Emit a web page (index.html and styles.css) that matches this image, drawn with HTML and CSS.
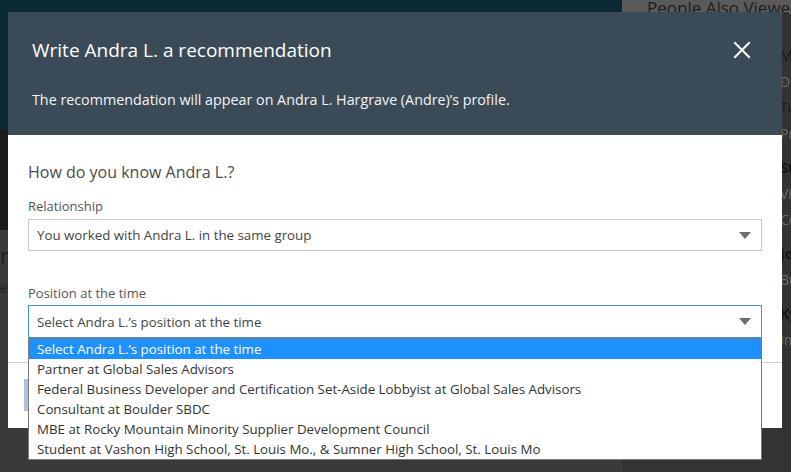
FILE: index.html
```html
<!DOCTYPE html>
<html lang="en">
<head>
    <meta charset="UTF-8">
    <link rel="stylesheet" href="styles.css">
</head>
<body>
    <div class="page">
        <div class="main-col">
            <div class="banner"></div>
            <div class="profile-strip"></div>
            <div class="profile-rest">
                <p class="frag big">r</p>
                <p class="frag">er</p>
            </div>
        </div>
        <aside class="sidebar">
            <div class="side-head">People Also Viewed</div>
            <div class="side-list">
                <p class="side-name">Michael Anderson</p>
                <p class="side-sub">Director of Sales</p>
                <p class="side-name">Teresa Jones</p>
                <p class="side-sub">Program Manager</p>
                <p class="side-bold">Stephanie Marsh</p>
                <p class="side-sub">Vice President</p>
                <p class="side-sub">Colorado</p>
                <p class="side-bold">Joseph Martinez</p>
                <p class="side-sub">Business Consultant</p>
                <p class="side-bold">Kyle Reynolds</p>
                <p class="side-sub">Implementation Lead</p>
            </div>
        </aside>
    </div>

    <div class="modal">
        <div class="modal-header">
            <div class="header-row">
                <h2>Write Andra L. a recommendation</h2>
                <button class="close" aria-label="Close">
                    <svg width="18" height="18" viewBox="0 0 18 18">
                        <path d="M2 2 L16 16 M16 2 L2 16" stroke="#ffffff" stroke-width="2" stroke-linecap="square"/>
                    </svg>
                </button>
            </div>
            <p class="subtitle">The recommendation will appear on Andra L. Hargrave (Andre)’s profile.</p>
        </div>

        <div class="modal-body">
            <h3>How do you know Andra L.?</h3>

            <label class="field-label">Relationship</label>
            <div class="select">
                <span>You worked with Andra L. in the same group</span>
                <span class="caret"></span>
            </div>

            <label class="field-label second">Position at the time</label>
            <div class="select-wrap">
                <div class="select focused">
                    <span>Select Andra L.’s position at the time</span>
                    <span class="caret"></span>
                </div>
                <ul class="options">
                    <li class="selected">Select Andra L.’s position at the time</li>
                    <li>Partner at Global Sales Advisors</li>
                    <li>Federal Business Developer and Certification Set-Aside Lobbyist at Global Sales Advisors</li>
                    <li>Consultant at Boulder SBDC</li>
                    <li>MBE at Rocky Mountain Minority Supplier Development Council</li>
                    <li>Student at Vashon High School, St. Louis Mo., &amp; Sumner High School, St. Louis Mo</li>
                </ul>
            </div>
        </div>

        <div class="modal-footer">
            <button class="next" aria-label="Next"></button>
        </div>
    </div>
</body>
</html>
```

FILE: styles.css
```css
* {
    box-sizing: border-box;
}
body {
    margin: 0;
    font-family: "Open Sans", "Noto Sans", sans-serif;
    background-color: #3b3b3b;
    overflow: hidden;
}
.page {
    display: flex;
    width: 791px;
    height: 472px;
}
.main-col {
    width: 622px;
    flex-shrink: 0;
    display: flex;
    flex-direction: column;
}
.banner {
    height: 130px;
    background-color: #0c2a33;
}
.profile-strip {
    height: 100px;
    background-color: #1c1c1c;
}
.profile-rest {
    flex: 1;
    background-color: #3a3a3a;
    padding-top: 10px;
}
.frag {
    margin: 0 0 8px 0;
    color: #222;
    font-size: 14px;
}
.frag.big {
    font-size: 22px;
}
.sidebar {
    flex: 1;
    min-width: 0;
    background-color: #333333;
    display: flex;
    flex-direction: column;
    overflow: hidden;
}
.side-head {
    height: 14px;
    background-color: #5a5a5a;
    color: #1d1d1d;
    font-size: 17px;
    line-height: 16px;
    padding-left: 25px;
    white-space: nowrap;
}
.side-list {
    padding: 34px 0 0 158px;
    white-space: nowrap;
}
.side-list p {
    margin: 0 0 10px 0;
    font-size: 14px;
    line-height: 16px;
}
.side-name {
    color: #1a1a1a;
}
.side-sub {
    color: #6b6b6b;
}
.side-bold {
    color: #161616;
    font-weight: 700;
    margin-top: 18px !important;
}

/* modal */
.modal {
    position: absolute;
    left: 8px;
    top: 12px;
    width: 774px;
    height: 416px;
    background: #ffffff;
}
.modal-header {
    background-color: #3a4a57;
    height: 123px;
    padding: 25px 24px 0 24px;
    color: #ffffff;
}
.header-row {
    display: flex;
    justify-content: space-between;
    align-items: center;
}
.modal-header h2 {
    margin: 0;
    font-size: 19px;
    font-weight: 400;
    line-height: 26px;
}
.close {
    background: none;
    border: none;
    padding: 0;
    margin-right: 7px;
    width: 18px;
    height: 18px;
    cursor: pointer;
}
.subtitle {
    margin: 27px 0 0 0;
    font-size: 14.3px;
    line-height: 20px;
    color: #f2f4f6;
}
.modal-body {
    padding: 27px 20px 0 20px;
}
.modal-body h3 {
    margin: 0;
    font-size: 16px;
    font-weight: 400;
    color: #4a4a4a;
    line-height: 20px;
}
.field-label {
    display: block;
    margin-top: 15px;
    font-size: 13px;
    color: #555555;
    line-height: 18px;
}
.field-label.second {
    margin-top: 33px;
}
.select {
    margin-top: 4px;
    height: 32px;
    border: 1px solid #c9c9c9;
    display: flex;
    align-items: center;
    justify-content: space-between;
    padding: 0 10px 0 8px;
    font-size: 13.3px;
    color: #444444;
}
.select.focused {
    margin-top: 3px;
    border-color: #4d8fcc;
    box-shadow: 0 1px 0 #7fb4e6;
    height: 33px;
}
.caret {
    width: 0;
    height: 0;
    border-left: 6px solid transparent;
    border-right: 6px solid transparent;
    border-top: 7px solid #6e6e6e;
}
.select-wrap {
    position: relative;
}
.options {
    position: absolute;
    left: 0;
    right: 0;
    top: 33px;
    margin: 0;
    padding: 0;
    list-style: none;
    background: #ffffff;
    border: 1px solid #7a7a7a;
    z-index: 2;
}
.options li {
    height: 20px;
    line-height: 20px;
    font-size: 13.3px;
    padding-left: 8px;
    color: #333333;
    white-space: nowrap;
}
.options li.selected {
    background-color: #1e90ff;
    color: #ffffff;
}
.modal-footer {
    position: absolute;
    left: 0;
    right: 0;
    bottom: 0;
    height: 66px;
    border-top: 1px solid #d0d0d0;
    padding: 16px 16px;
}
.next {
    height: 32px;
    width: 80px;
    border: none;
    background-color: #a9c5dd;
}
```
